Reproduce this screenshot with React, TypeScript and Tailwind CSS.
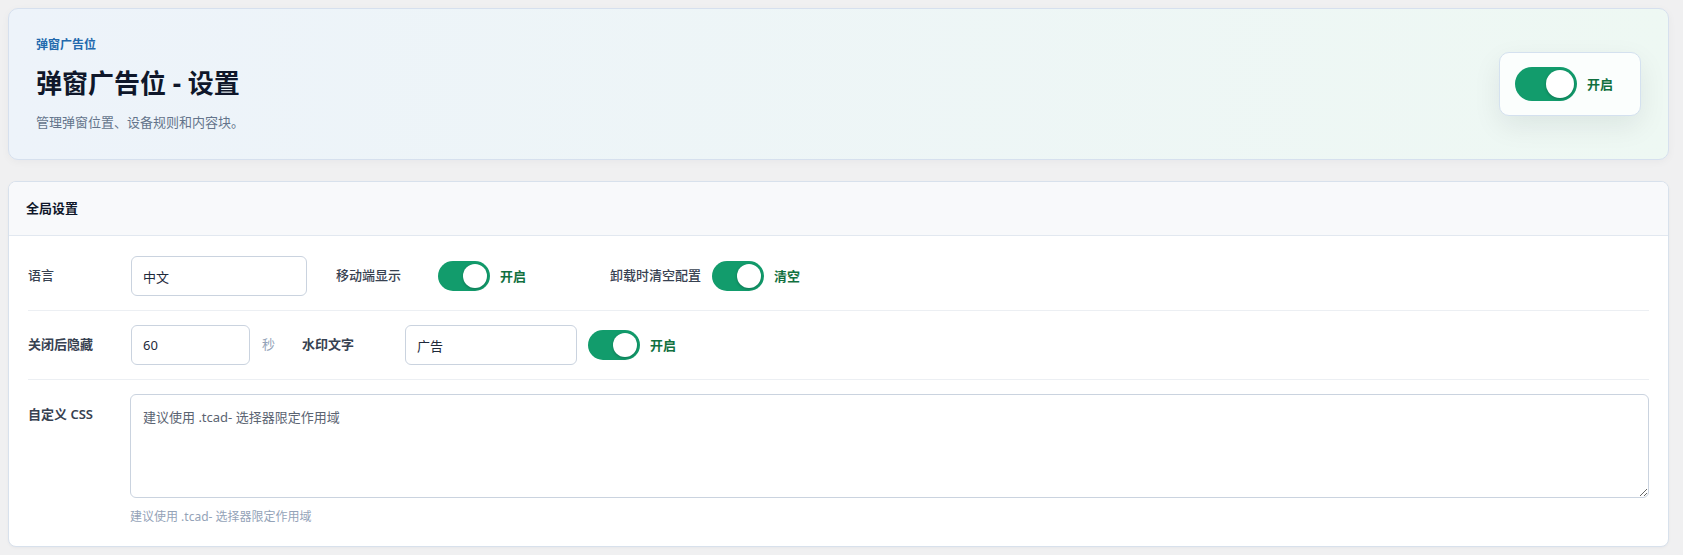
import { useState } from "react";

type ToggleProps = {
  on: boolean;
  onChange: (v: boolean) => void;
  size?: "lg" | "md";
};

function Toggle({ on, onChange, size = "md" }: ToggleProps) {
  const lg = size === "lg";
  return (
    <button
      type="button"
      role="switch"
      aria-checked={on}
      onClick={() => onChange(!on)}
      className={`relative flex shrink-0 items-center rounded-full p-[3px] ${
        lg ? "h-[34px] w-[62px]" : "h-[30px] w-[52px]"
      } ${on ? "justify-end bg-[#129c6c]" : "justify-start bg-[#cbd5e1]"}`}
    >
      <span
        className={`block rounded-full bg-white shadow-[0_1px_3px_rgba(0,0,0,0.25)] ${
          lg ? "h-[28px] w-[28px]" : "h-[24px] w-[24px]"
        }`}
      />
    </button>
  );
}

function SwitchField({
  on,
  onChange,
  onText,
  offText,
  size,
}: {
  on: boolean;
  onChange: (v: boolean) => void;
  onText: string;
  offText: string;
  size?: "lg" | "md";
}) {
  return (
    <div className="flex items-center gap-[10px]">
      <Toggle on={on} onChange={onChange} size={size} />
      <span
        className={`text-[13px] leading-5 font-bold ${
          on ? "text-[#11703f]" : "text-[#64748b]"
        }`}
      >
        {on ? onText : offText}
      </span>
    </div>
  );
}

export default function App() {
  const [enabled, setEnabled] = useState(true);
  const [mobile, setMobile] = useState(true);
  const [cleanup, setCleanup] = useState(true);
  const [watermark, setWatermark] = useState(true);
  const [lang, setLang] = useState("中文");
  const [hideSec, setHideSec] = useState("60");
  const [markText, setMarkText] = useState("广告");
  const [css, setCss] = useState("");

  const inputCls =
    "h-10 rounded-md border border-[#cad3df] bg-white px-[11px] text-[13px] text-[#1e293b] outline-none focus:border-[#2271b1]";

  return (
    <div
      className="min-h-screen bg-[#f0f0f1] pt-2 pl-2 pr-[14px] pb-2"
      style={{ fontFamily: '"Noto Sans", "Noto Sans CJK SC", sans-serif' }}
    >
      {/* page header */}
      <div className="flex items-center justify-between rounded-[10px] border border-[#d6e0ee] bg-linear-to-r from-[#edf3fa] to-[#eef8f3] pt-[27px] pb-[27px] pl-[27px] pr-[27px] shadow-[0_2px_8px_rgba(15,23,42,0.04)]">
        <div>
          <div className="text-[12px] leading-[18px] font-bold text-[#2269ad]">弹窗广告位</div>
          <h1 className="mt-3 text-[26px] leading-[34px] font-bold text-[#0f172a]">
            弹窗广告位 - 设置
          </h1>
          <p className="mt-3 text-[13px] leading-5 text-[#64748b]">
            管理弹窗位置、设备规则和内容块。
          </p>
        </div>
        <div className="flex h-[64px] w-[142px] items-center rounded-[10px] border border-[#d4e1ef] bg-[#fbfefd] pl-[15px] shadow-[0_10px_28px_rgba(15,23,42,0.08)]">
          <SwitchField
            on={enabled}
            onChange={setEnabled}
            onText="开启"
            offText="关闭"
            size="lg"
          />
        </div>
      </div>

      {/* global settings */}
      <div className="mt-[21px] overflow-hidden rounded-lg border border-[#d8e1ec] bg-white shadow-[0_1px_3px_rgba(15,23,42,0.04)]">
        <div className="flex h-[54px] items-center border-b border-[#e2e8f0] bg-[#f8f9fb] px-[17px]">
          <h2 className="text-[13px] font-bold text-[#0f172a]">全局设置</h2>
        </div>

        <div className="px-[19px] pt-[6px]">
          <div className="flex items-center border-b border-[#eceff3] py-[14px]">
            <label className="w-[103px] text-[13px] font-medium text-[#374151]">语言</label>
            <input className={`${inputCls} w-[176px]`} value={lang} onChange={(e) => setLang(e.target.value)} />
            <span className="ml-[29px] min-w-[90px] text-[13px] font-medium text-[#374151]">移动端显示</span>
            <div className="ml-3 w-[160px]">
              <SwitchField on={mobile} onChange={setMobile} onText="开启" offText="关闭" />
            </div>
            <span className="ml-3 min-w-[90px] text-[13px] font-medium text-[#374151]">卸载时清空配置</span>
            <div className="ml-[11px]">
              <SwitchField on={cleanup} onChange={setCleanup} onText="清空" offText="保留" />
            </div>
          </div>

          <div className="flex items-center border-b border-[#eceff3] py-[14px]">
            <label className="w-[103px] text-[13px] font-semibold text-[#374151]">关闭后隐藏</label>
            <input className={`${inputCls} w-[119px]`} value={hideSec} onChange={(e) => setHideSec(e.target.value)} />
            <span className="ml-3 text-[13px] text-[#94a3b8]">秒</span>
            <span className="ml-[27px] min-w-[90px] text-[13px] font-semibold text-[#374151]">水印文字</span>
            <input className={`${inputCls} ml-[13px] w-[172px]`} value={markText} onChange={(e) => setMarkText(e.target.value)} />
            <div className="ml-[11px]">
              <SwitchField on={watermark} onChange={setWatermark} onText="开启" offText="关闭" />
            </div>
          </div>

          <div className="flex items-start pt-[14px] pb-5">
            <label className="w-[102px] pt-[10px] text-[13px] leading-5 font-semibold text-[#374151]">
              自定义 CSS
            </label>
            <div className="flex-1">
              <textarea
                className="block h-[104px] w-full rounded-md border border-[#cad3df] bg-white px-3 py-3 text-[13px] leading-5 text-[#1e293b] outline-none placeholder:text-[#5b6472] focus:border-[#2271b1]"
                placeholder="建议使用 .tcad- 选择器限定作用域"
                value={css}
                onChange={(e) => setCss(e.target.value)}
              />
              <p className="mt-[10px] text-[12px] leading-[18px] text-[#94a3b8]">
                建议使用 .tcad- 选择器限定作用域
              </p>
            </div>
          </div>
        </div>
      </div>
    </div>
  );
}
